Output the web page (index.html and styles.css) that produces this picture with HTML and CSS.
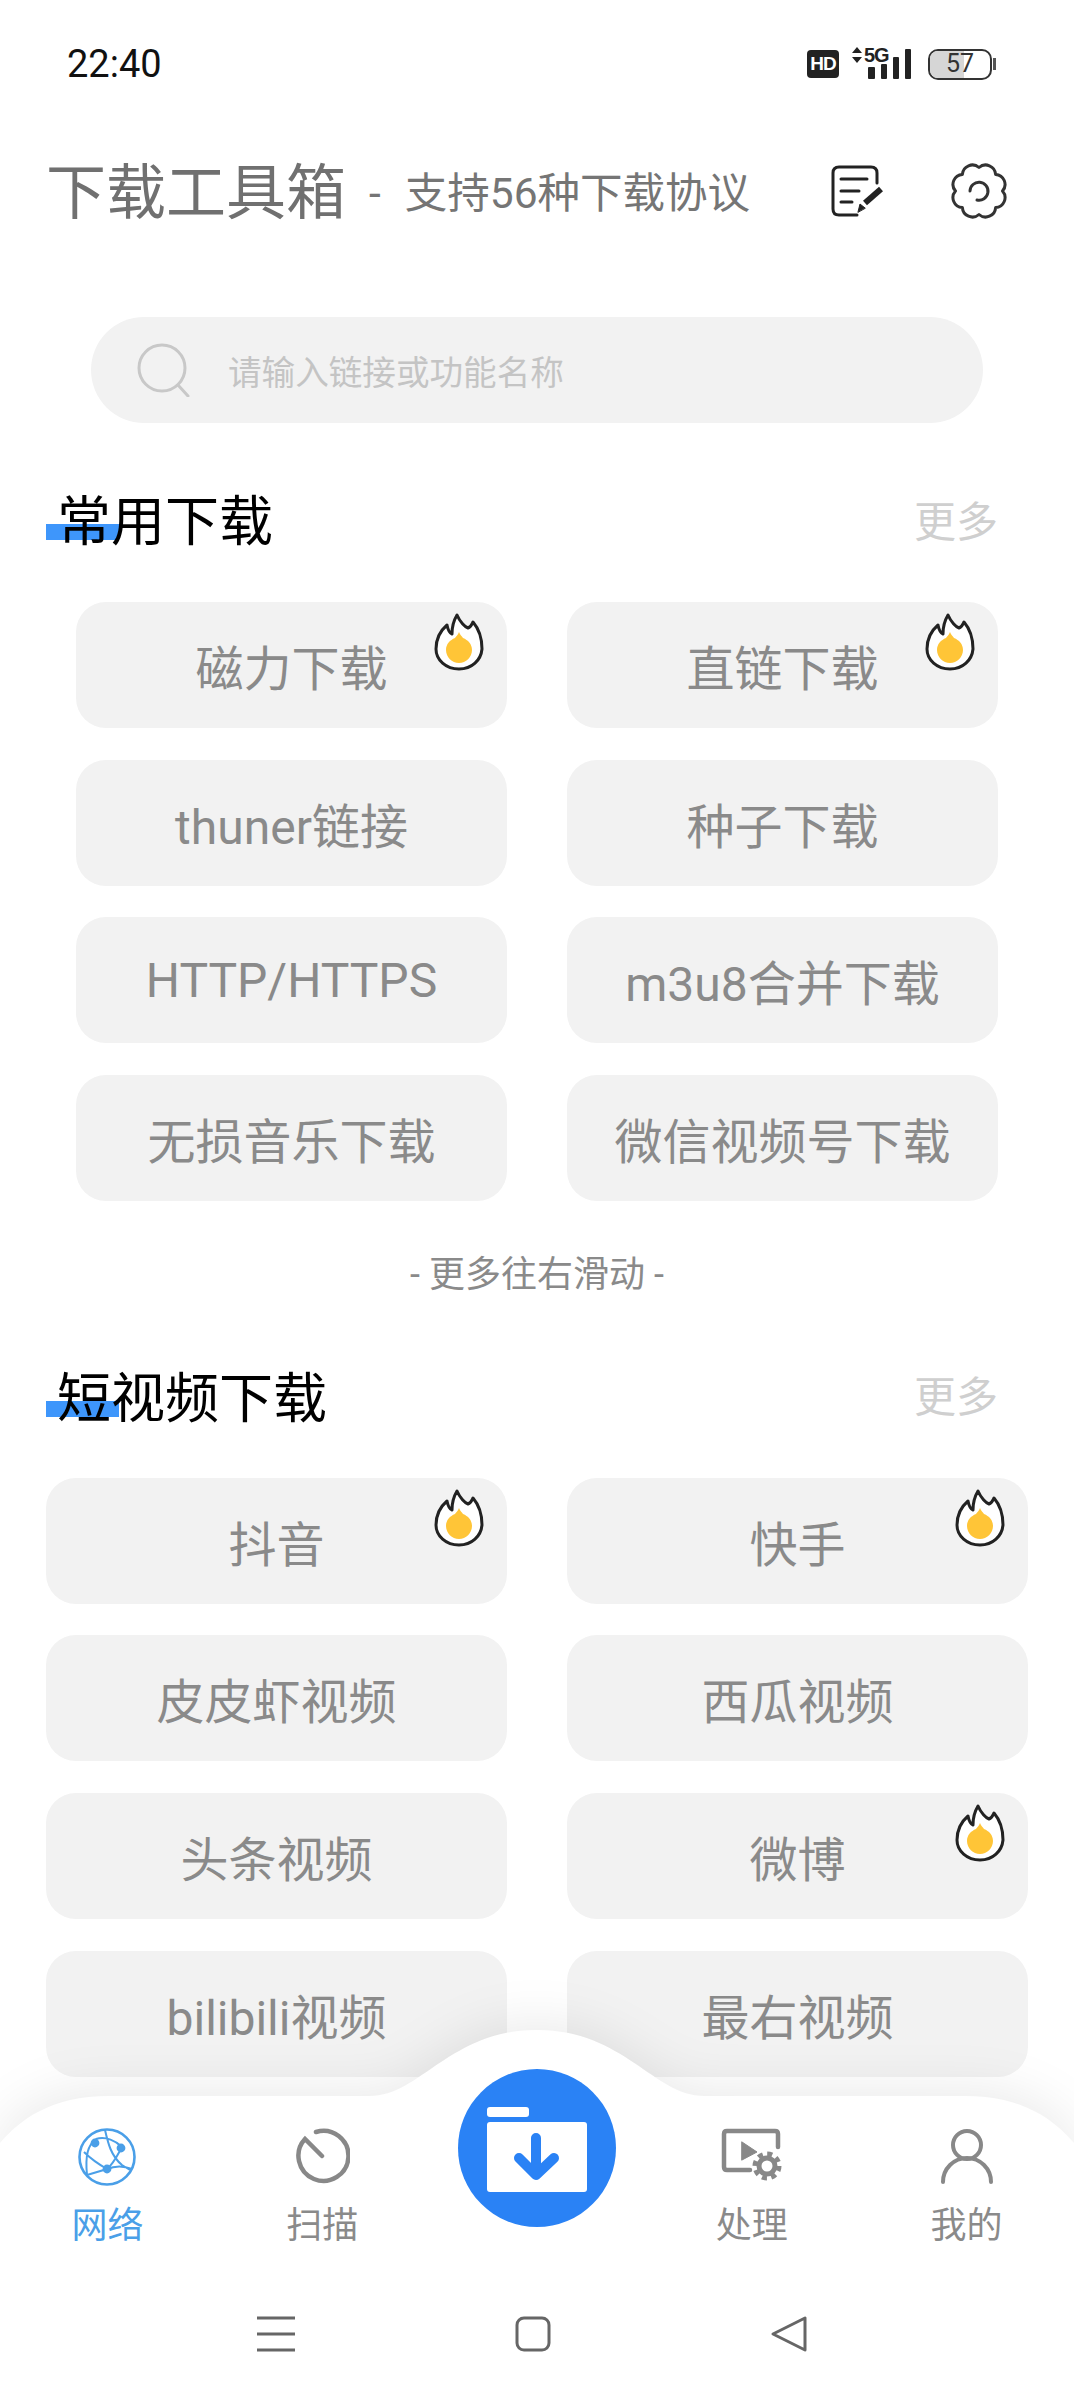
FILE: index.html
```html
<!DOCTYPE html>
<html lang="zh-CN">
<head>
  <meta charset="UTF-8">
  <meta name="viewport" content="width=device-width, initial-scale=1.0">
  <title>下载工具箱</title>
  <link rel="stylesheet" href="styles.css">
</head>
<body>
<svg class="defs">
  <defs>
    <symbol id="hot" viewBox="0 0 50 58">
      <path d="M25 56C12 56 2 47 2 36C2 26 6 18 13 12C14 17 15 20 18 21C18 14 20 7 23 2C26 9 31 14 34 15C37 14 38 11 39 9C45 16 48 27 48 36C47 47 38 56 25 56Z" fill="#fff" stroke="#222" stroke-width="3" stroke-linejoin="round"/>
      <path d="M25 50C18 50 12 44 12 37C12 31 16 27 21 25C22 23 24 22 25 19C26 22 28 23 29 25C34 27 38 31 38 37C38 44 32 50 25 50Z" fill="#ffc537"/>
    </symbol>
  </defs>
</svg>

<div class="page">
  <!-- status bar -->
  <div class="status-bar">
    <span class="clock">22:40</span>
    <div class="status-icons">
      <span class="hd">HD</span>
      <svg class="signal" width="60" height="42" viewBox="0 -4 60 42">
        <path d="M0 6L5 0L10 6ZM0 10H10L5 16Z" fill="#222"/>
        <text x="12" y="15" class="signal-text">5G</text>
        <rect x="16" y="20" width="7" height="12" fill="#222" rx="1"/>
        <rect x="29" y="17" width="6" height="15" fill="#222" rx="1"/>
        <rect x="41" y="10" width="6" height="22" fill="#222" rx="1"/>
        <rect x="53" y="2" width="6" height="30" fill="#222" rx="1"/>
      </svg>
      <div class="battery"><span class="battery-fill"></span><span class="battery-num">57</span></div>
      <span class="battery-nub"></span>
    </div>
  </div>

  <!-- title -->
  <header class="app-head">
    <h1>下载工具箱</h1>
    <span class="app-sub"><span class="dash">-</span>支持56种下载协议</span>
    <svg class="edit-icon" width="54" height="52" viewBox="0 0 54 52" fill="none" stroke="#222" stroke-width="3" stroke-linecap="round">
      <path d="M26 50H8Q2 50 2 44V8Q2 2 8 2H40Q46 2 46 8V18"/>
      <path d="M10 14H36M10 26H28M10 37H21"/>
      <path d="M34 38L50 24" stroke-width="6" stroke-linecap="butt"/>
      <path d="M27 47L29 39L34 43Z" fill="#222" stroke-width="1"/>
    </svg>
    <svg class="gear-icon" width="58" height="58" viewBox="0 0 58 58" fill="none" stroke="#333" stroke-width="3" stroke-linecap="round" stroke-linejoin="round">
      <path d="M29 5.5A10 10 0 0 1 45.6 12.4A10 10 0 0 1 52.5 29A10 10 0 0 1 45.6 45.6A10 10 0 0 1 29 52.5A10 10 0 0 1 12.4 45.6A10 10 0 0 1 5.5 29A10 10 0 0 1 12.4 12.4A10 10 0 0 1 29 5.5Z"/>
      <path d="M20 29A9 9 0 1 1 27 38"/>
    </svg>
  </header>

  <!-- search -->
  <div class="search">
    <svg width="56" height="54" viewBox="0 0 56 54" fill="none" stroke="#c8c8c8" stroke-width="3" stroke-linecap="round">
      <circle cx="26" cy="25" r="23"/>
      <path d="M42 42L52 53"/>
    </svg>
    <span class="search-text">请输入链接或功能名称</span>
  </div>

  <!-- common downloads -->
  <section class="sec">
    <div class="sec-head">
      <h2 class="sec-title">常用下载</h2>
      <span class="more">更多</span>
    </div>
    <div class="btn-grid narrow">
      <div class="btn">磁力下载<svg class="hot"><use href="#hot"/></svg></div>
      <div class="btn">直链下载<svg class="hot"><use href="#hot"/></svg></div>
      <div class="btn">thuner链接</div>
      <div class="btn">种子下载</div>
      <div class="btn">HTTP/HTTPS</div>
      <div class="btn">m3u8合并下载</div>
      <div class="btn">无损音乐下载</div>
      <div class="btn">微信视频号下载</div>
    </div>
    <p class="hint">- 更多往右滑动 -</p>
  </section>

  <!-- short video downloads -->
  <section class="sec">
    <div class="sec-head">
      <h2 class="sec-title">短视频下载</h2>
      <span class="more">更多</span>
    </div>
    <div class="btn-grid wide">
      <div class="btn">抖音<svg class="hot"><use href="#hot"/></svg></div>
      <div class="btn">快手<svg class="hot"><use href="#hot"/></svg></div>
      <div class="btn">皮皮虾视频</div>
      <div class="btn">西瓜视频</div>
      <div class="btn">头条视频</div>
      <div class="btn">微博<svg class="hot"><use href="#hot"/></svg></div>
      <div class="btn">bilibili视频</div>
      <div class="btn">最右视频</div>
    </div>
  </section>

  <!-- bottom bar -->
  <nav class="bottom-nav">
    <svg class="nav-bg" width="1074" height="370" viewBox="0 0 1074 370">
      <path d="M0 113C20 90 50 66 110 66H370C420 66 450 0 537 0C624 0 654 66 704 66H964C1024 66 1054 90 1074 113V370H0Z" fill="#fff"/>
    </svg>
    <div class="tabs">
      <div class="tab active">
        <svg width="58" height="58" viewBox="0 0 58 58" fill="none" stroke="#4a9fe8" stroke-width="2">
          <circle cx="29" cy="29" r="27.5" stroke-width="2.6"/>
          <path d="M18 11C10 17 7 27 9 47M18 11C28 8 38 13 44 19M27 2C30 15 33 28 44 37L52 42M44 19C40 26 36 35 29 41L9 47M6 24C14 32 22 37 29 41C36 38 44 37 54 41"/>
          <circle cx="17" cy="15" r="3.4" fill="#4a9fe8"/>
          <circle cx="43" cy="20" r="3.4" fill="#4a9fe8"/>
          <circle cx="29" cy="41" r="3.4" fill="#4a9fe8"/>
        </svg>
        <span>网络</span>
      </div>
      <div class="tab">
        <svg width="56" height="58" viewBox="0 0 56 58" fill="none" stroke="#888" stroke-width="4.5" stroke-linecap="round">
          <path d="M22 4A25 25 0 1 1 11 11L28 28"/>
        </svg>
        <span>扫描</span>
      </div>
      <div class="tab-fab">
        <div class="fab">
          <svg width="100" height="85" viewBox="0 0 100 85">
            <rect x="0" y="0" width="42" height="10" rx="3" fill="#fff"/>
            <rect x="0" y="15" width="100" height="70" rx="3" fill="#fff"/>
            <path d="M49 31V68M32 51L49 68L67 51" fill="none" stroke="#2a82f5" stroke-width="10" stroke-linecap="round" stroke-linejoin="round"/>
          </svg>
        </div>
      </div>
      <div class="tab">
        <svg width="62" height="58" viewBox="0 0 62 58" fill="none" stroke="#888" stroke-width="4.5" stroke-linecap="round" stroke-linejoin="round">
          <path d="M29 42H6Q3 42 3 39V6Q3 3 6 3H54Q57 3 57 6V19"/>
          <path d="M21 14L36 24L21 32Z" fill="#888" stroke-width="1"/>
          <circle cx="46" cy="38" r="8" stroke-width="5"/>
          <circle cx="46" cy="38" r="12" stroke-width="5" stroke-dasharray="5 4.4" stroke-linecap="butt"/>
        </svg>
        <span>处理</span>
      </div>
      <div class="tab">
        <svg width="54" height="58" viewBox="0 0 54 58" fill="none" stroke="#888" stroke-width="4" stroke-linecap="round">
          <circle cx="27" cy="17" r="14"/>
          <path d="M3 54A24 24 0 0 1 51 54"/>
        </svg>
        <span>我的</span>
      </div>
    </div>

    <div class="sys-nav">
      <svg width="38" height="36" viewBox="0 0 38 36" stroke="#666" stroke-width="3"><path d="M0 2H38M0 18H38M0 34H38"/></svg>
      <svg width="36" height="36" viewBox="0 0 36 36" fill="none" stroke="#666" stroke-width="3"><rect x="2" y="2" width="32" height="32" rx="7"/></svg>
      <svg width="36" height="36" viewBox="0 0 36 36" fill="none" stroke="#666" stroke-width="3" stroke-linejoin="round"><path d="M2 18L34 2V34Z"/></svg>
    </div>
  </nav>
</div>
</body>
</html>
```

FILE: styles.css
```css
* { box-sizing: border-box; }
body { margin: 0; background: #fff; font-family: Roboto, "Noto Sans CJK SC", sans-serif; color: #8a8a8a; }
.defs { display: none; }
.page { position: relative; width: 1074px; height: 2400px; overflow: hidden; }

/* status bar */
.status-bar { height: 128px; display: flex; align-items: center; justify-content: space-between; padding: 0 78px 0 67px; }
.clock { font-size: 38px; color: #111; }
.status-icons { display: flex; align-items: center; }
.hd { width: 32px; height: 28px; margin-right: 13px; background: #222; border-radius: 4px; color: #fff; font: bold 19px/28px "Liberation Sans", sans-serif; letter-spacing: -1px; text-align: center; }
.signal { margin-right: 16px; }
.signal-text { font: bold 20px "Liberation Sans", sans-serif; letter-spacing: -1px; fill: #222; }
.battery { position: relative; width: 64px; height: 31px; border: 2.5px solid #333; border-radius: 10px; overflow: hidden; font-size: 25px; line-height: 26px; color: #333; text-align: center; }
.battery-fill { position: absolute; left: 0; top: 0; bottom: 0; width: 34px; background: #d6d6d6; }
.battery-num { position: relative; }
.battery-nub { width: 3px; height: 12px; margin-left: 1px; background: #555; }

/* title */
.app-head { height: 132px; display: flex; align-items: center; padding-left: 46px; color: #707070; }
.app-head h1 { margin: 0; font-size: 60px; font-weight: 400; line-height: 80px; }
.app-sub { margin-left: 23px; font-size: 42.5px; line-height: 60px; color: #757575; }
.dash { margin-right: 24px; }
.edit-icon { margin: -6px 0 0 81px; }
.gear-icon { margin: -6px 0 0 65px; }

/* search */
.search { display: flex; align-items: center; height: 106px; margin: 57px 91px 0 91px; padding-left: 45px; background: #f2f2f2; border-radius: 53px; }
.search-text { margin-left: 36px; font-size: 33.6px; color: #c4c4c4; }

/* sections */
.sec-head { position: relative; height: 100px; display: flex; align-items: center; justify-content: space-between; padding: 0 76px 0 57px; }
.sec-title { position: relative; top: 2px; margin: 0; font-size: 54px; font-weight: 400; line-height: 70px; color: #000; }
.sec-title::before { content: ""; position: absolute; z-index: -1; left: -11px; top: 36px; width: 73px; height: 16px; background: #3e96fb; }
.more { font-size: 42px; color: #cfcfcf; }

.btn-grid { display: grid; grid-auto-rows: 126px; row-gap: 31.6px; column-gap: 60px; }
.btn-grid.narrow { grid-template-columns: 431px 431px; padding: 0 76px; }
.btn-grid.wide { grid-template-columns: 461px 461px; padding: 0 46px; }
.btn { position: relative; display: flex; align-items: center; justify-content: center; background: #f2f2f2; border-radius: 30px; font-size: 48px; color: #8a8a8a; }
.hot { position: absolute; right: 23px; top: 11px; width: 50px; height: 58px; }
.hint { height: 72px; margin: 38px 0 0; font-size: 36px; line-height: 72px; text-align: center; color: #8a8a8a; }

/* first section sits right under the search bar */
.search + .sec { margin-top: 45px; }
.search + .sec .sec-head { margin-bottom: 34px; }
.search + .sec .sec-title { top: 5px; }
.sec + .sec { margin-top: 37px; }
.sec + .sec .sec-head { margin-bottom: 30px; }
.sec + .sec .more { margin-top: -8px; }

/* bottom bar */
.bottom-nav { position: absolute; left: 0; right: 0; bottom: 0; height: 370px; }
.nav-bg { position: absolute; left: 0; top: 0; overflow: visible; filter: drop-shadow(0 -8px 24px rgba(0, 0, 0, 0.08)); }
.tabs { position: relative; display: grid; grid-template-columns: repeat(5, 1fr); height: 252px; padding-top: 98px; }
.tab { display: flex; flex-direction: column; align-items: center; font-size: 36px; line-height: 50px; color: #8a8a8a; }
.tab svg { display: block; margin-bottom: 15px; }
.tab.active { color: #4a9fe8; }
.tab-fab { position: relative; }
.fab { position: absolute; left: 50%; top: -59px; width: 158px; height: 158px; margin-left: -79px; display: flex; align-items: center; justify-content: center; padding-top: 2px; background: #2a82f5; border-radius: 50%; }
.sys-nav { position: relative; display: flex; align-items: center; justify-content: center; gap: 220px; height: 104px; padding-right: 10px; }
.sys-nav svg { overflow: visible; }
```
